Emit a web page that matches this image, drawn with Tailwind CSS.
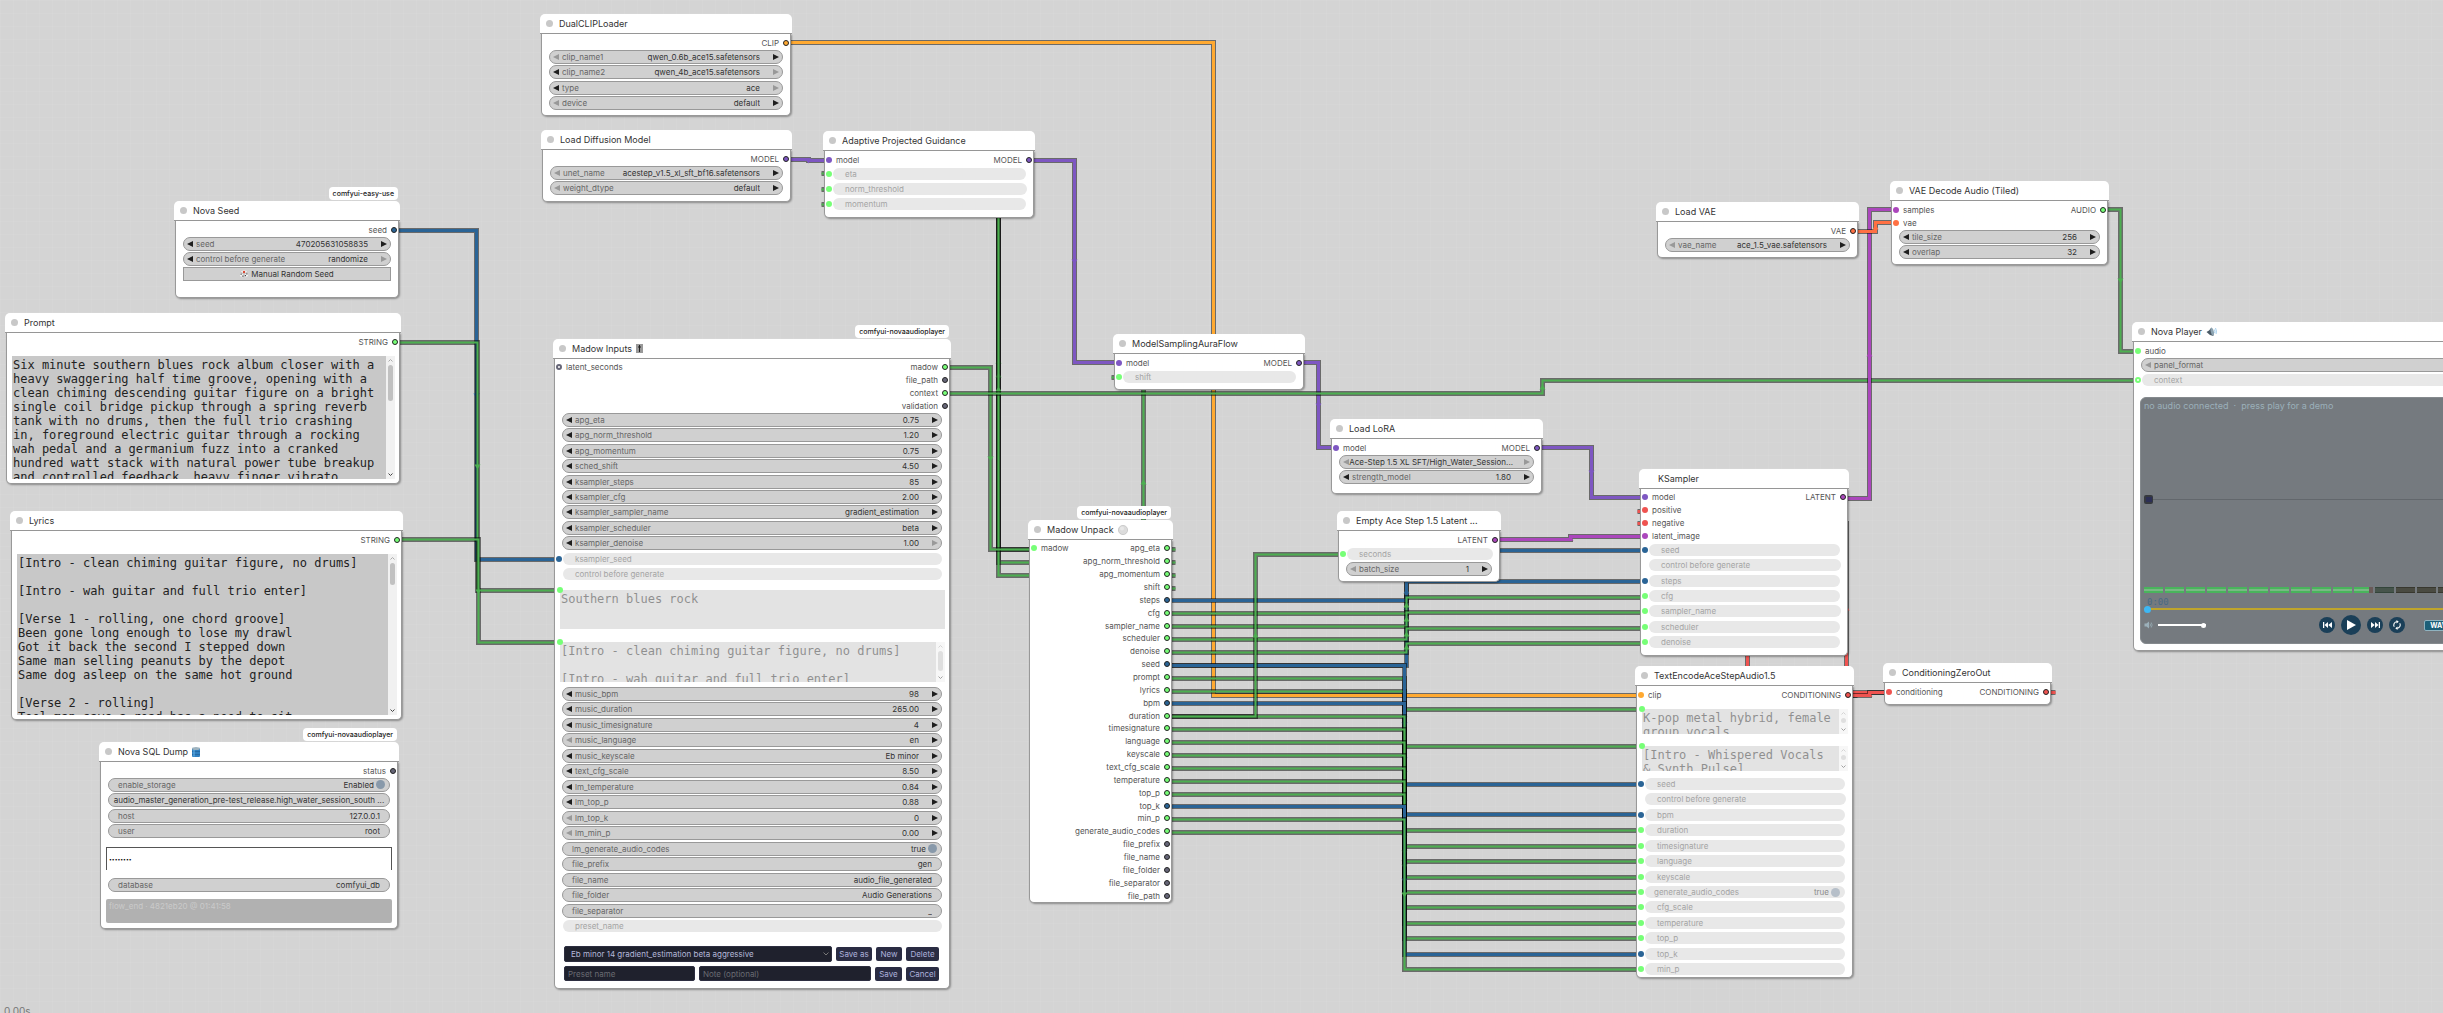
<!DOCTYPE html>
<html lang="en">
<head>
<meta charset="utf-8">
<meta name="viewport" content="width=device-width, initial-scale=1">
<title>Workflow canvas</title>
<script src="https://cdn.jsdelivr.net/npm/@tailwindcss/browser@4"></script>
</head>
<body class="font-['Inter',sans-serif]">
<main class="relative h-screen w-full overflow-hidden bg-[#d4d4d4] bg-[linear-gradient(to_right,rgb(255_255_255/0.05)_1px,transparent_1px),linear-gradient(to_bottom,rgb(255_255_255/0.05)_1px,transparent_1px)] bg-[size:13px_13px]">
  <svg id="wires" class="absolute inset-0 h-full w-full" fill="none" stroke-linejoin="miter" aria-hidden="true"></svg>
  <div id="nodes"></div>
  <p class="absolute top-[1005px] left-1 text-[10px] leading-3 text-[#777]">0.00s</p>
</main>

<template id="player">
  <section class="mt-[9px] ml-[6px] flex h-[247px] flex-col rounded-md border border-[#858a8e] bg-[#757a7f] pl-[3px]" aria-label="Audio player">
    <p class="mt-[3px] text-[9px] leading-[10px] whitespace-pre text-[#9bb0ba]">no audio connected  ·  press play for a demo</p>
    <div class="mt-[83px] flex h-[10px] items-center">
      <span class="flex h-[9px] w-[9px] items-center justify-center rounded-xs bg-[#36393f]"><i class="h-[5px] w-[6px] bg-[#2c2f55]"></i></span>
      <i class="h-px flex-1 bg-[#62676c]"></i>
    </div>
    <div id="meter" class="mt-[83px] flex h-[6px] gap-[2px]"></div>
    <div class="relative mt-[3px] h-[18px]">
      <time class="ml-[3px] block font-['DejaVu_Sans_Mono',monospace] text-[9px] leading-[12px] text-[#4a6a84]">0:00</time>
      <i class="absolute top-[12px] right-0 left-0 h-[2px] bg-[#bfa52c]"></i>
      <i class="absolute top-[10px] left-0 h-[7px] w-[7px] rounded-full bg-[#3db8f5]"></i>
    </div>
    <div class="mt-px flex h-5 items-center">
      <svg class="h-[8px] w-[9px]" viewBox="0 0 18 16"><path d="M1 5h4l5-4v14l-5-4H1z" fill="#9bb0ba"/><path d="M12 5q2 3 0 6M14.500 3q3.500 5 0 10" stroke="#9bb0ba" stroke-width="1.500" fill="none"/></svg>
      <label class="relative ml-[5px] flex h-[6px] w-[48px] items-center">
        <i class="h-[2px] w-full bg-white"></i>
        <i class="absolute right-0 h-[5px] w-[5px] rounded-full bg-white"></i>
        <input type="range" value="100" aria-label="Volume" class="absolute inset-0 w-full opacity-0">
      </label>
      <div class="ml-[113px] flex items-center gap-[6px]">
        <button aria-label="Previous" class="flex h-4 w-4 items-center justify-center rounded-full bg-[#1a3f58]"><svg class="h-[6px] w-[9px]" viewBox="0 0 18 12" fill="#fff"><path d="M0 0h2.500v12H0zM10 0v12L3 6zM18 0v12l-7.500-6z"/></svg></button>
        <button aria-label="Play" class="flex h-5 w-5 items-center justify-center rounded-full bg-[#1a3f58]"><svg class="ml-px h-[10px] w-[9px]" viewBox="0 0 9 10" fill="#fff"><path d="M0 0l9 5-9 5z"/></svg></button>
        <button aria-label="Next" class="flex h-4 w-4 items-center justify-center rounded-full bg-[#1a3f58]"><svg class="h-[6px] w-[9px]" viewBox="0 0 18 12" fill="#fff"><path d="M15.500 0H18v12h-2.500zM8 0v12l7-6zM0 0v12l7.500-6z"/></svg></button>
        <button aria-label="Repeat" class="flex h-4 w-4 items-center justify-center rounded-full bg-[#1a3f58]"><svg class="h-[10px] w-[10px]" viewBox="0 0 20 20" fill="none" stroke="#fff" stroke-width="2.200"><path d="M4.500 13.500A6.500 6.500 0 0 1 10 3.500M15.500 6.500A6.500 6.500 0 0 1 10 16.500"/><path d="M9 0l4.500 3.500L9 7zM11 13l-4.500 3.500L11 20z" fill="#fff" stroke="none"/></svg></button>
      </div>
      <button class="ml-[19px] h-[11px] w-[38px] rounded-xs border border-[#8fb3c0] bg-[#1c5f78] text-center text-[7px] leading-[9px] font-bold text-white">WAVES</button>
    </div>
  </section>
</template>

<template id="presets">
  <form class="mt-[12px] mr-[10px] ml-[9px] flex flex-col gap-1 text-[8px] text-[#aeb2dc]">
    <div class="flex h-4 items-center gap-1">
      <div class="relative h-4 flex-1">
        <select aria-label="Preset" class="block h-4 w-full appearance-none rounded-xs border border-[#2d2e40] bg-[#1f212d] pl-[6px] text-[#b4b8d8]"><option>Eb minor 14 gradient_estimation beta aggressive</option></select>
        <svg class="pointer-events-none absolute top-[6px] right-[3px] h-[4px] w-[6px]" viewBox="0 0 6 4" fill="none" stroke="#777"><path d="M0.500 0.500L3 3L5.500 0.500"/></svg>
      </div>
      <button type="button" class="h-[14px] w-[36px] rounded-xs bg-[#2a2c43]">Save as</button>
      <button type="button" class="h-[14px] w-[26px] rounded-xs bg-[#2a2c43]">New</button>
      <button type="button" class="h-[14px] w-[33px] rounded-xs bg-[#2a2c43]">Delete</button>
    </div>
    <div class="flex h-[15px] items-center gap-1">
      <input aria-label="Preset name" placeholder="Preset name" class="h-[15px] w-[131px] rounded-xs border border-[#2d2e40] bg-[#1f212d] px-[3px] placeholder:text-[#6a6b72]">
      <input aria-label="Note" placeholder="Note (optional)" class="h-[15px] min-w-0 flex-1 rounded-xs border border-[#2d2e40] bg-[#1f212d] px-[3px] placeholder:text-[#6a6b72]">
      <button type="button" class="h-[14px] w-[27px] rounded-xs bg-[#2a2c43]">Save</button>
      <button type="button" class="h-[14px] w-[33px] rounded-xs bg-[#2a2c43]">Cancel</button>
    </div>
  </form>
</template>

<script>
const BLUE = '#2a6496', GREEN = '#77ff77', GREY = '#667';
const PURPLE = '#7e57c2', PINK = '#ab47bc', RED = '#ef5350', ORANGE = '#ffa931', CORAL = '#ff7043', WIRE = '#4caf50';
let uid = 0;

const icons = {
  fader: '<svg class="h-[9px] w-[7px]" viewBox="0 0 7 9"><rect width="7" height="9" fill="#999"/><path d="M3.500 1v7M2 3h3" stroke="#222"/></svg>',
  drum: '<svg class="h-[10px] w-[8px]" viewBox="0 0 8 10"><rect y="1" width="8" height="9" rx="1" fill="#2f7fc0"/><ellipse cx="4" cy="1.500" rx="4" ry="1.500" fill="#9fb4c0"/><path d="M0 4.500h8M0 7.500h8" stroke="#1c5c94" stroke-width=".6"/><path d="M2 3v6.500" stroke="#69b5ea"/></svg>',
  ball: '<svg class="h-[10px] w-[10px]" viewBox="0 0 10 10"><circle cx="5" cy="5" r="4.600" fill="#dcdcdc" stroke="#c4c4c4" stroke-width=".8"/><circle cx="4" cy="3.500" r="2" fill="#e8e8e8"/></svg>',
  speaker: '<svg class="h-[10px] w-[11px]" viewBox="0 0 11 10"><path d="M0.500 5l2.500-1.500L5.500 0.500l2 8.500L4 8z" fill="#4a5a66"/><ellipse cx="6.300" cy="4.700" rx="1.500" ry="4" transform="rotate(-14 6.300 4.700)" fill="#8da3b1"/><path d="M8.300 2.500q1 1.500 .4 3.500M9.500 1q1.500 3 .6 6" stroke="#8fc4e8" stroke-width=".8" fill="none"/></svg>',
  die: '<svg class="h-[8px] w-[8px]" viewBox="0 0 8 8"><path d="M4 0l4 2v4L4 8 0 6V2z" fill="#f2f2f2"/><path d="M0 2l4 2v4M8 2L4 4" stroke="#999" stroke-width=".6" fill="none"/><circle cx="4" cy="2" r="1.200" fill="#d9452f"/><path d="M.5 3.500h1.200v1.200H.5zM2.300 5.500h1.200v1.200H2.300zM4.800 5h1.200v1.200H4.800zM6.300 3.300h1.200v1.200H6.300z" fill="#444"/></svg>'
};

const arrow = (dir, on) => `<button type="button" class="shrink-0" aria-label="${dir ? 'Next' : 'Previous'}"><svg class="block h-[6px] w-[6px]" viewBox="0 0 6 6" fill="${on ? '#1e1e1e' : '#999'}"><path d="${dir ? 'M0 0L6 3L0 6z' : 'M6 0L0 3L6 6z'}"/></svg></button>`;
const dot = (c, cls) => `<i class="${cls}" style="background:${c}"></i>`;
const rowDot = c => c === 'ring'
  ? '<i class="absolute -left-[6px] h-[6px] w-[6px] rounded-full border-2 border-[#77ff77] bg-white"></i>'
  : c ? dot(c, 'absolute -left-[6px] h-[6px] w-[6px] rounded-full') : '';

function widget([t, label, value, a, b]) {
  const id = 'w' + uid++;
  if (t === 'x') return `<div class="flex flex-1 items-center"><button type="button" class="flex h-[14px] w-full items-center justify-center gap-[3px] border border-[#999] bg-[#d0d0d0] text-[#333]">${icons.die}${label}</button></div>`;
  if (t === 'd') return `<div class="relative flex flex-1 items-center">${rowDot(value)}<div class="ml-px flex h-[12px] w-full items-center rounded-full bg-[#e8e8e8] pl-[12px] text-[#a4a4a4]"><label for="${id}">${label}</label><input id="${id}" disabled class="min-w-0 flex-1"></div></div>`;
  if (t === 'D') return `<div class="relative flex flex-1 items-center">${rowDot(a)}<div class="ml-px flex h-[12px] w-full items-center justify-between rounded-full bg-[#e8e8e8] pr-[5px] pl-[9px] text-[#a4a4a4]"><label for="${id}">${label}</label><span class="flex items-center gap-[2px] text-[#8c8c8c]">${value}<input id="${id}" type="checkbox" checked disabled class="h-[9px] w-[9px] appearance-none rounded-full bg-[#b6bfc9]"></span></div></div>`;
  if (t === 'b') return `<div class="flex flex-1 items-center"><div class="flex h-[14px] w-full items-center justify-between rounded-full border border-[#999] bg-[#d0d0d0] pr-[4px] pl-[9px] text-[#666]"><label for="${id}">${label}</label><span class="flex items-center gap-[2px] text-[#333]">${value}<input id="${id}" type="checkbox" checked class="h-[9px] w-[9px] appearance-none rounded-full bg-[#8899aa]"></span></div></div>`;
  if (t === 't') return `<div class="flex flex-1 items-center"><div class="flex h-[14px] w-full items-center rounded-full border border-[#999] bg-[#d0d0d0] text-[#666] ${label ? 'px-[9px]' : 'px-[3px]'}">${label ? `<label for="${id}">${label}</label>` : ''}<input id="${id}" ${label ? '' : 'aria-label="Value"'} value="${value}" class="min-w-0 flex-1 text-[#333] ${label ? 'text-right' : 'text-center'}"></div></div>`;
  const field = t === 'c'
    ? `<select id="${id}" ${label ? '' : 'aria-label="Value"'} class="h-[12px] min-w-0 flex-1 appearance-none text-[#333] [text-align-last:right]"><option>${value}</option></select>`
    : `<input id="${id}" value="${value}" class="min-w-0 flex-1 text-right text-[#333]">`;
  return `<div class="flex flex-1 items-center"><div class="flex h-[14px] w-full items-center rounded-full border border-[#999] bg-[#d0d0d0] px-[3px] text-[#666]">${arrow(0, a)}${label ? `<label for="${id}" class="ml-[3px]">${label}</label>` : ''}${field}<span class="flex ${label ? 'ml-[13px]' : 'ml-[11px]'}">${arrow(1, b)}</span></div></div>`;
}

function slots(ins, outs) {
  const n = Math.max(ins.length, outs.length);
  let h = '';
  for (let i = 0; i < n; i++) {
    const a = ins[i], b = outs[i];
    h += `<li class="flex flex-1 items-center justify-between px-px">`
      + (a ? `<span class="flex items-center gap-1">${a[1] === 'ring' ? '<i class="h-[6px] w-[6px] rounded-full border-2 border-[#667] bg-white"></i>' : dot(a[1], 'h-[6px] w-[6px] rounded-full')}${a[0]}</span>` : '<span></span>')
      + (b ? `<span class="flex items-center gap-1">${b[0]}${dot(b[1], 'h-[6px] w-[6px] rounded-full border border-[#222]')}</span>` : '')
      + '</li>';
  }
  return `<ul class="flex flex-col text-[8px] leading-[12px] text-[#555]" style="height:${Math.round(n * 12.87)}px">${h}</ul>`;
}

const widgets = list => `<div class="mx-[7px] flex flex-col text-[8px] leading-[12px] whitespace-nowrap" style="height:${Math.round(list.length * 15.47)}px">${list.map(widget).join('')}</div>`;

function area({ text, h, gap, thumb, off, name, dotc }) {
  return `<div class="relative mr-[4px] ml-[5px] flex" style="height:${h}px;margin-top:${gap}px">
    <div class="flex h-full w-full ${off ? 'opacity-50' : ''}">
    <textarea aria-label="${name}" ${off ? 'disabled' : ''} class="h-full min-w-0 flex-1 resize-none overflow-hidden bg-[#c8c8c8] px-px pt-[2px] font-['DejaVu_Sans_Mono',monospace] text-[12px] leading-[14px] whitespace-pre text-[#222]">${text}</textarea>
    ${thumb ? `<div class="flex h-full w-[9px] flex-col items-center bg-[#f1f1f1] py-[3px]">
      <svg class="h-[3px] w-[5px] shrink-0" viewBox="0 0 5 3" fill="none" stroke="#aaa"><path d="M0.500 2.500L2.500 0.500L4.500 2.500"/></svg>
      <i class="mt-[3px] w-[5px] rounded-full bg-[#c1c1c1]" style="height:${thumb}px"></i>
      <svg class="mt-auto h-[3px] w-[5px] shrink-0" viewBox="0 0 5 3" fill="none" stroke="#444"><path d="M0.500 0.500L2.500 2.500L4.500 0.500"/></svg></div>` : ''}
    </div>
    ${dotc ? '<i class="absolute -top-[3px] -left-[3px] h-[6px] w-[6px] rounded-full bg-[#77ff77]"></i>' : ''}
  </div>`;
}

function node({ x, y, w, h, title, icon, badge, plain, ins = [], outs = [], body = '' }) {
  return `<article class="absolute flex flex-col rounded-md" style="left:${x}px;top:${y}px;width:${w}px;height:${h}px">
    ${badge ? `<span class="absolute -top-[14px] right-[2px] rounded-sm bg-white px-1 text-[7px] leading-[13px] font-medium whitespace-nowrap text-[#222]">${badge}</span>` : ''}
    <header class="flex h-5 shrink-0 items-center gap-[6px] rounded-t-[5px] border-b border-[#999] bg-white pl-[6px] text-[9px] leading-3 whitespace-nowrap text-[#333]">
      <i class="h-[7px] w-[7px] rounded-full ${plain ? 'bg-white' : 'bg-[#c8c8c8]'}"></i><h2 class="flex items-center gap-1">${title}${icon ? icons[icon] : ''}</h2>
    </header>
    <div class="mx-px min-h-0 flex-1 rounded-b-[5px] border-x border-b border-[#999] bg-white pt-[2px] shadow-[1px_1px_2px_rgb(0_0_0/0.35)]">${slots(ins, outs)}${body}</div>
  </article>`;
}

const tpl = id => document.getElementById(id).innerHTML;
const prompt = `Six minute southern blues rock album closer with a
heavy swaggering half time groove, opening with a
clean chiming descending guitar figure on a bright
single coil bridge pickup through a spring reverb
tank with no drums, then the full trio crashing
in, foreground electric guitar through a rocking
wah pedal and a germanium fuzz into a cranked
hundred watt stack with natural power tube breakup
and controlled feedback, heavy finger vibrato`;
const lyrics = `[Intro - clean chiming guitar figure, no drums]

[Intro - wah guitar and full trio enter]

[Verse 1 - rolling, one chord groove]
Been gone long enough to lose my drawl
Got it back the second I stepped down
Same man selling peanuts by the depot
Same dog asleep on the same hot ground

[Verse 2 - rolling]
Tool man says a road has a need to sit`;

const unpack = ['apg_eta', 'apg_norm_threshold', 'apg_momentum', 'shift', '*steps', 'cfg', 'sampler_name', 'scheduler', 'denoise', '*seed', 'prompt', 'lyrics', '*bpm', 'duration', 'timesignature', 'language', 'keyscale', 'text_cfg_scale', 'temperature', 'top_p', '*top_k', 'min_p', 'generate_audio_codes', '-file_prefix', '-file_name', '-file_folder', '-file_separator', '-file_path']
  .map(s => s[0] === '*' ? [s.slice(1), BLUE] : s[0] === '-' ? [s.slice(1), GREY] : [s, GREEN]);

const nodes = [
  { x: 174, y: 201, w: 226, h: 97, title: 'Nova Seed', badge: 'comfyui-easy-use', outs: [['seed', BLUE]],
    body: widgets([['n', 'seed', '470205631058835', 1, 1], ['c', 'control before generate', 'randomize', 1, 0], ['x', 'Manual Random Seed']]) },
  { x: 5, y: 313, w: 396, h: 171, title: 'Prompt', outs: [['STRING', GREEN]], body: area({ text: prompt, h: 123, gap: 8, thumb: 36, name: 'Prompt' }) },
  { x: 10, y: 511, w: 393, h: 209, title: 'Lyrics', outs: [['STRING', GREEN]], body: area({ text: lyrics, h: 161, gap: 8, thumb: 22, name: 'Lyrics' }) },
  { x: 99, y: 742, w: 300, h: 187, title: 'Nova SQL Dump', icon: 'drum', badge: 'comfyui-novaaudioplayer', outs: [['status', GREY]],
    body: widgets([['b', 'enable_storage', 'Enabled'], ['t', '', 'audio_master_generation_pre-test_release.high_water_session_south ...'], ['t', 'host', '127.0.0.1'], ['t', 'user', 'root']])
      + '<input type="password" aria-label="Password" value="password" class="mt-[8px] ml-[5px] block h-[23px] w-[286px] border-x border-t border-[#555] bg-white px-[2px] font-[\'Liberation_Sans\',sans-serif] text-[5px] text-black">'
      + '<div class="h-[7px]"></div>' + widgets([['t', 'database', 'comfyui_db']])
      + '<p class="mt-[7px] ml-[5px] h-[24px] w-[286px] rounded-xs bg-[#b1b1b1] pt-[2px] pl-[3px] text-[8px] leading-[11px] text-[#cacaca]">flow_end · 4821eb20 @ 01:41:58</p>' },
  { x: 540, y: 14, w: 252, h: 102, title: 'DualCLIPLoader', outs: [['CLIP', ORANGE]],
    body: widgets([['c', 'clip_name1', 'qwen_0.6b_ace15.safetensors', 0, 1], ['c', 'clip_name2', 'qwen_4b_ace15.safetensors', 1, 0], ['c', 'type', 'ace', 1, 0], ['c', 'device', 'default', 0, 1]]) },
  { x: 541, y: 130, w: 251, h: 72, title: 'Load Diffusion Model', outs: [['MODEL', PURPLE]],
    body: widgets([['c', 'unet_name', 'acestep_v1.5_xl_sft_bf16.safetensors', 0, 1], ['c', 'weight_dtype', 'default', 0, 1]]) },
  { x: 823, y: 131, w: 212, h: 87, title: 'Adaptive Projected Guidance', ins: [['model', PURPLE]], outs: [['MODEL', PURPLE]],
    body: widgets([['d', 'eta', GREEN], ['d', 'norm_threshold', GREEN], ['d', 'momentum', GREEN]]) },
  { x: 553, y: 339, w: 398, h: 650, title: 'Madow Inputs', icon: 'fader', badge: 'comfyui-novaaudioplayer', ins: [['latent_seconds', 'ring']],
    outs: [['madow', GREEN], ['file_path', GREY], ['context', GREEN], ['validation', GREY]],
    body: widgets([['n', 'apg_eta', '0.75', 1, 1], ['n', 'apg_norm_threshold', '1.20', 1, 1], ['n', 'apg_momentum', '0.75', 1, 1], ['n', 'sched_shift', '4.50', 1, 1], ['n', 'ksampler_steps', '85', 1, 1], ['n', 'ksampler_cfg', '2.00', 1, 1], ['c', 'ksampler_sampler_name', 'gradient_estimation', 1, 1], ['c', 'ksampler_scheduler', 'beta', 1, 1], ['n', 'ksampler_denoise', '1.00', 1, 0], ['d', 'ksampler_seed', BLUE], ['d', 'control before generate', '']])
      + area({ text: 'Southern blues rock', h: 39, gap: 8, off: 1, name: 'Style', dotc: 1 })
      + area({ text: '[Intro - clean chiming guitar figure, no drums]\n\n[Intro - wah guitar and full trio enter]', h: 40, gap: 13, thumb: 20, off: 1, name: 'Song lyrics', dotc: 1 })
      + '<div class="h-1"></div>'
      + widgets([['n', 'music_bpm', '98', 1, 1], ['n', 'music_duration', '265.00', 1, 1], ['c', 'music_timesignature', '4', 1, 1], ['c', 'music_language', 'en', 0, 1], ['c', 'music_keyscale', 'Eb minor', 1, 1], ['n', 'text_cfg_scale', '8.50', 1, 1], ['n', 'lm_temperature', '0.84', 1, 1], ['n', 'lm_top_p', '0.88', 1, 1], ['n', 'lm_top_k', '0', 0, 1], ['n', 'lm_min_p', '0.00', 0, 1], ['b', 'lm_generate_audio_codes', 'true'], ['t', 'file_prefix', 'gen'], ['t', 'file_name', 'audio_file_generated'], ['t', 'file_folder', 'Audio Generations'], ['t', 'file_separator', '_'], ['d', 'preset_name', '']])
      + tpl('presets') },
  { x: 1113, y: 334, w: 192, h: 56, title: 'ModelSamplingAuraFlow', ins: [['model', PURPLE]], outs: [['MODEL', PURPLE]], body: widgets([['d', 'shift', GREEN]]) },
  { x: 1028, y: 520, w: 145, h: 383, title: 'Madow Unpack', icon: 'ball', badge: 'comfyui-novaaudioplayer', ins: [['madow', GREEN]], outs: unpack },
  { x: 1330, y: 419, w: 213, h: 75, title: 'Load LoRA', ins: [['model', PURPLE]], outs: [['MODEL', PURPLE]],
    body: widgets([['c', '', 'Ace-Step 1.5 XL SFT/High_Water_Session...', 0, 0], ['n', 'strength_model', '1.80', 1, 1]]) },
  { x: 1337, y: 511, w: 164, h: 71, title: 'Empty Ace Step 1.5 Latent ...', outs: [['LATENT', PINK]],
    body: widgets([['d', 'seconds', GREEN], ['n', 'batch_size', '1', 0, 1]]) },
  { x: 1639, y: 469, w: 210, h: 187, title: 'KSampler', plain: 1, ins: [['model', PURPLE], ['positive', RED], ['negative', RED], ['latent_image', PINK]], outs: [['LATENT', PINK]],
    body: widgets([['d', 'seed', BLUE], ['d', 'control before generate', ''], ['d', 'steps', BLUE], ['d', 'cfg', GREEN], ['d', 'sampler_name', GREEN], ['d', 'scheduler', GREEN], ['d', 'denoise', GREEN]]) },
  { x: 1635, y: 666, w: 219, h: 312, title: 'TextEncodeAceStepAudio1.5', ins: [['clip', ORANGE]], outs: [['CONDITIONING', RED]],
    body: area({ text: 'K-pop metal hybrid, female\ngroup vocals', h: 25, gap: 8, thumb: 5, off: 1, name: 'Tags', dotc: 1 })
      + area({ text: '[Intro - Whispered Vocals\n& Synth Pulse]', h: 25, gap: 12, thumb: 5, off: 1, name: 'Encoded lyrics', dotc: 1 })
      + '<div class="h-[5px]"></div>'
      + widgets([['d', 'seed', BLUE], ['d', 'control before generate', ''], ['d', 'bpm', BLUE], ['d', 'duration', GREEN], ['d', 'timesignature', GREEN], ['d', 'language', GREEN], ['d', 'keyscale', GREEN], ['D', 'generate_audio_codes', 'true', GREEN], ['d', 'cfg_scale', GREEN], ['d', 'temperature', GREEN], ['d', 'top_p', GREEN], ['d', 'top_k', BLUE], ['d', 'min_p', GREEN]]) },
  { x: 1883, y: 663, w: 169, h: 42, title: 'ConditioningZeroOut', ins: [['conditioning', RED]], outs: [['CONDITIONING', RED]] },
  { x: 1656, y: 202, w: 203, h: 56, title: 'Load VAE', outs: [['VAE', CORAL]], body: widgets([['c', 'vae_name', 'ace_1.5_vae.safetensors', 0, 1]]) },
  { x: 1890, y: 181, w: 219, h: 84, title: 'VAE Decode Audio (Tiled)', ins: [['samples', PINK], ['vae', CORAL]], outs: [['AUDIO', GREEN]],
    body: widgets([['n', 'tile_size', '256', 1, 1], ['n', 'overlap', '32', 1, 1]]) },
  { x: 2132, y: 322, w: 400, h: 329, title: 'Nova Player', icon: 'speaker', ins: [['audio', GREEN]],
    body: widgets([['c', 'panel_format', 'default', 0, 1], ['d', 'context', 'ring']]) + tpl('player') }
];
document.getElementById('nodes').innerHTML = nodes.map(node).join('');

let bars = '';
for (let i = 0; i < 16; i++) {
  bars += i === 10
    ? '<span class="flex w-[19px]"><i class="flex-1 border-y-2 border-[#49b45c] bg-[#79b984]"></i><i class="w-[4px] bg-[#6a5a58]"></i></span>'
    : i < 11 ? '<i class="w-[19px] border-y-2 border-[#49b45c] bg-[#79b984]"></i>'
    : i === 11 ? '<i class="w-[19px] border-y border-[#33453a] bg-[#46544b]"></i>'
    : '<i class="w-[19px] border-y border-[#38382f] bg-[#4a4b42]"></i>';
}
document.getElementById('meter').innerHTML = bars;

/* Links: start x, start y, middle x, end y, end x, colour */
const out = i => 549 + i * 12.87;
const links = [
  [786, 42, 1213, 695, 1642, ORANGE],
  [786, 159, 808, 160, 829, PURPLE],
  [1029, 160, 1074, 362, 1119, PURPLE],
  [1299, 362, 1318, 447, 1337, PURPLE],
  [1175, out(0), 998, 173, 821, WIRE],
  [1175, out(1), 998, 189, 821, WIRE],
  [1175, out(2), 998, 204, 821, WIRE],
  [1175, out(3), 1143, 377, 1111, WIRE],
  [394, 230, 476, 559, 559, BLUE],
  [395, 342, 477, 590, 559, WIRE],
  [397, 539, 478, 642, 559, WIRE],
  [945, 367, 990, 549, 1034, WIRE],
  [945, 393, 1542, 380, 2138, WIRE],
  [1537, 447, 1591, 497, 1645, PURPLE],
  [1857, 695, 1747, 511, 1637, RED],
  [2055, 692, 1846, 523, 1637, RED],
  [1495, 539, 1570, 536, 1645, PINK],
  [1167, out(9), 1406, 550, 1645, BLUE],
  [1167, out(4), 1406, 581, 1645, BLUE],
  [1167, out(5), 1406, 597, 1645, WIRE],
  [1167, out(6), 1406, 612, 1645, WIRE],
  [1167, out(7), 1406, 628, 1645, WIRE],
  [1167, out(8), 1406, 643, 1645, WIRE],
  [1167, out(10), 1404, 709, 1642, WIRE],
  [1167, out(11), 1404, 746, 1642, WIRE],
  [1167, out(22), 1404, 892, 1642, WIRE],
  [1167, out(9), 1404, 784, 1642, BLUE],
  [1167, out(12), 1404, 814, 1642, BLUE],
  [1167, out(13), 1404, 830, 1642, WIRE],
  [1167, out(14), 1404, 846, 1642, WIRE],
  [1167, out(15), 1404, 861, 1642, WIRE],
  [1167, out(16), 1404, 877, 1642, WIRE],
  [1167, out(17), 1404, 907, 1642, WIRE],
  [1167, out(18), 1404, 923, 1642, WIRE],
  [1167, out(19), 1404, 938, 1642, WIRE],
  [1167, out(20), 1404, 954, 1642, BLUE],
  [1167, out(21), 1404, 969, 1642, WIRE],
  [1167, out(13), 1255, 554, 1343, WIRE],
  [1848, 695, 1869, 692, 1889, RED],
  [1843, 498, 1869, 209, 1896, PINK],
  [1853, 231, 1875, 222, 1896, CORAL],
  [2103, 209, 2120, 351, 2138, WIRE]
];
document.getElementById('wires').innerHTML = links.map(([x1, y1, m, y2, x2, c]) => {
  const d = `M${x1} ${Math.round(y1)}H${m}V${y2}H${x2}`;
  const my = Math.round((y1 + y2) / 2), s = y2 > y1 ? 1 : -1;
  return `<g transform="translate(.5 .5)"><path d="${d}" stroke="#000" stroke-opacity=".5" stroke-width="5"/><path d="${d}" stroke="${c}" stroke-width="${c === WIRE ? 2 : 3}"/><path d="M${m - 3} ${my - 2 * s}h6l-3 ${5 * s}z" fill="${c}"/></g>`;
}).join('');
</script>
</body>
</html>
